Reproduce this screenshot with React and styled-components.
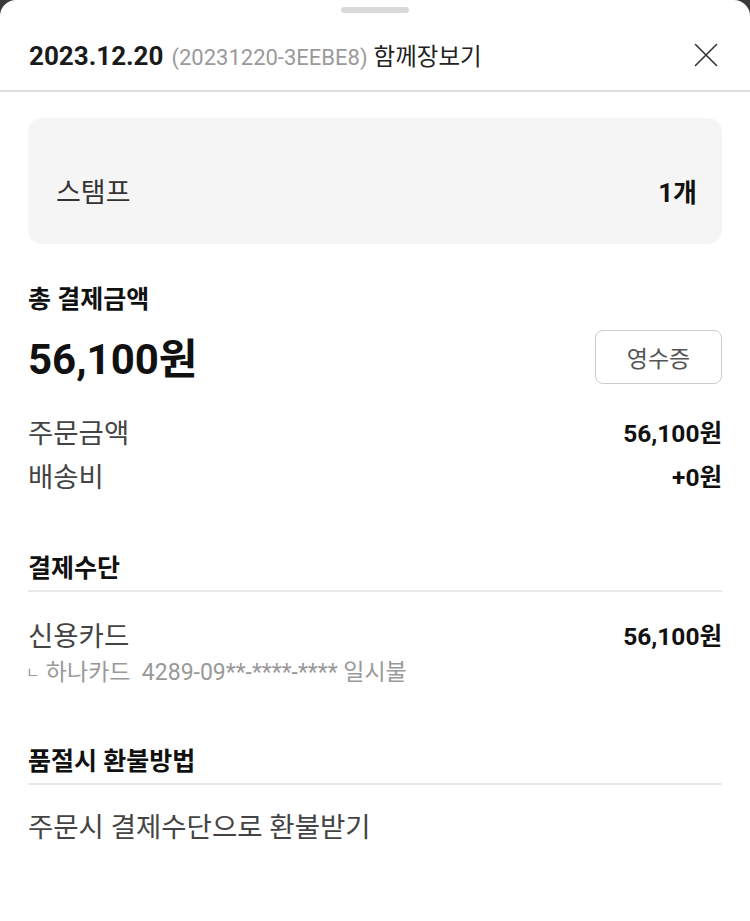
import React from "react";
import styled, { createGlobalStyle } from "styled-components";

const Global = createGlobalStyle`
  html, body {
    margin: 0;
    padding: 0;
    background: #3b3b3b;
    font-family: Roboto, "Noto Sans CJK KR", sans-serif;
    color: #111;
  }
  * { box-sizing: border-box; }
`;

const Sheet = styled.div`
  width: 750px;
  height: 921px;
  background: #fff;
  border-radius: 16px 16px 0 0;
  overflow: hidden;
`;

const Handle = styled.div`
  width: 68px;
  height: 6px;
  margin: 7px auto 0;
  border-radius: 3px;
  background: #d9d9d9;
`;

const Header = styled.header`
  display: flex;
  align-items: center;
  height: 79px;
  padding: 7px 32px 0 29px;
  border-bottom: 2px solid #dcdfe1;
`;

const Title = styled.div`
  flex: 1;
  display: flex;
  align-items: baseline;
  white-space: nowrap;
`;

const DateText = styled.span`
  font-size: 26px;
  font-weight: 700;
  color: #1a1a1a;
  margin-right: 8px;
`;

const OrderNo = styled.span`
  font-size: 22px;
  color: #9a9a9a;
  margin-right: 6px;
`;

const Kind = styled.span`
  font-size: 23.5px;
  color: #222;
`;

const CloseBtn = styled.button`
  border: 0;
  background: none;
  padding: 0;
  width: 24px;
  height: 24px;
  display: flex;
  align-items: center;
  justify-content: center;
`;

const Body = styled.main`
  padding: 26px 28px 0;
`;

const StampBox = styled.div`
  display: flex;
  justify-content: space-between;
  align-items: center;
  height: 126px;
  padding: 24px 25px 0 28px;
  border-radius: 14px;
  background: #f5f5f5;
  line-height: 36px;
`;

const StampLabel = styled.span`
  font-size: 27px;
  color: #333;
`;

const Bold = styled.span`
  font-weight: 700;
  color: #111;
  font-size: ${(p) => p.size || 24.5}px;
`;

const Section = styled.section`
  margin-top: ${(p) => p.top}px;
`;

const SectionTitle = styled.h3`
  margin: 0;
  font-size: 25px;
  font-weight: 700;
  line-height: 34px;
  color: #111;
  padding-bottom: ${(p) => (p.ruled ? 4 : 0)}px;
  border-bottom: ${(p) => (p.ruled ? "2px solid #e9e9e9" : "none")};
`;

const TotalRow = styled.div`
  display: flex;
  justify-content: space-between;
  align-items: center;
  margin-top: 9px;
`;

const TotalAmount = styled.div`
  font-size: 42px;
  font-weight: 700;
  line-height: 54px;
  padding-top: 7px;
`;

const ReceiptBtn = styled.button`
  width: 127px;
  height: 54px;
  border: 1px solid #cccccc;
  border-radius: 8px;
  background: #fff;
  font-family: inherit;
  font-size: 23px;
  color: #555;
  padding: 0;
`;

const Rows = styled.div`
  display: flex;
  flex-direction: column;
  gap: ${(p) => p.gap || 8}px;
  margin-top: ${(p) => p.top || 0}px;
`;

const Row = styled.div`
  display: flex;
  justify-content: space-between;
  align-items: center;
  line-height: 36px;
  font-size: 27.5px;
  color: #444;
`;

const SubLine = styled.div`
  display: flex;
  align-items: center;
  font-size: 23px;
  color: #999;
  line-height: 30px;
  margin-top: 3px;
  white-space: pre;
`;

const Mark = styled.span`
  font-size: 15px;
  margin: 0 6px 0 -2px;
`;

const Plain = styled.div`
  font-size: 27.5px;
  color: #444;
  line-height: 36px;
`;

const Close = () => (
  <svg width="24" height="24" viewBox="0 0 24 24" fill="none">
    <path d="M1.5 1.5l21 21M22.5 1.5l-21 21" stroke="#333" strokeWidth="1.6" strokeLinecap="round" />
  </svg>
);

export default function App() {
  return (
    <>
      <Global />
      <Sheet>
        <Handle />
        <Header>
          <Title>
            <DateText>2023.12.20</DateText>
            <OrderNo>(20231220-3EEBE8)</OrderNo>
            <Kind>함께장보기</Kind>
          </Title>
          <CloseBtn aria-label="닫기">
            <Close />
          </CloseBtn>
        </Header>
        <Body>
          <StampBox>
            <StampLabel>스탬프</StampLabel>
            <Bold size={26}>1개</Bold>
          </StampBox>

          <Section top={39}>
            <SectionTitle>총 결제금액</SectionTitle>
            <TotalRow>
              <TotalAmount>56,100원</TotalAmount>
              <ReceiptBtn>영수증</ReceiptBtn>
            </TotalRow>
            <Rows top={29}>
              <Row>
                주문금액 <Bold>56,100원</Bold>
              </Row>
              <Row>
                배송비 <Bold>+0원</Bold>
              </Row>
            </Rows>
          </Section>

          <Section top={56}>
            <SectionTitle ruled>결제수단</SectionTitle>
            <Rows top={27}>
              <div>
                <Row>
                  신용카드 <Bold>56,100원</Bold>
                </Row>
                <SubLine>
                  <Mark>ㄴ</Mark>하나카드  4289-09**-****-**** 일시불
                </SubLine>
              </div>
            </Rows>
          </Section>

          <Section top={57}>
            <SectionTitle ruled>품절시 환불방법</SectionTitle>
            <Rows top={25}>
              <Plain>주문시 결제수단으로 환불받기</Plain>
            </Rows>
          </Section>
        </Body>
      </Sheet>
    </>
  );
}
